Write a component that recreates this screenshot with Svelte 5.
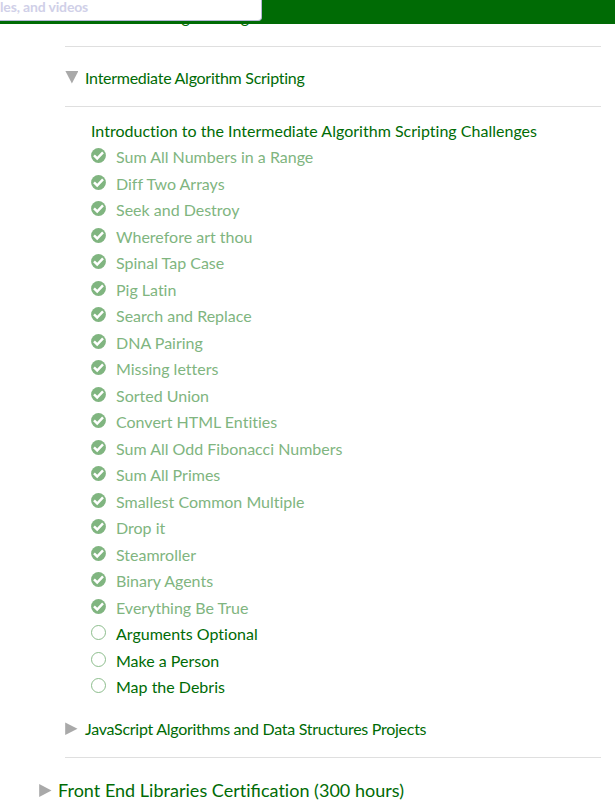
<script>
  const challenges = [
    'Sum All Numbers in a Range',
    'Diff Two Arrays',
    'Seek and Destroy',
    'Wherefore art thou',
    'Spinal Tap Case',
    'Pig Latin',
    'Search and Replace',
    'DNA Pairing',
    'Missing letters',
    'Sorted Union',
    'Convert HTML Entities',
    'Sum All Odd Fibonacci Numbers',
    'Sum All Primes',
    'Smallest Common Multiple',
    'Drop it',
    'Steamroller',
    'Binary Agents',
    'Everything Be True',
    'Arguments Optional',
    'Make a Person',
    'Map the Debris'
  ].map((title, i) => ({ title, done: i < 18 }));
</script>

<div class="page">
  <header>
    <div class="search">les, and videos</div>
  </header>

  <main>
    <section class="block previous"><h5>Functional Programming</h5></section>

    <section class="block open">
      <svg class="arrow" width="13" height="13" viewBox="0 0 13 13"><path d="M.4 0H13.4L6.9 12.4Z" /></svg>
      <h5>Intermediate Algorithm Scripting</h5>
    </section>

    <ul>
      <li class="intro">Introduction to the Intermediate Algorithm Scripting Challenges</li>
      {#each challenges as c}
        <li class:done={c.done}>
          <svg class="mark" width="15" height="15" viewBox="0 0 15 15">
            {#if c.done}
              <circle cx="7.5" cy="7.5" r="7.4" fill="#80b580" />
              <path d="M3 7.4 6.2 10.5 12 4.4" fill="none" stroke="#fff" stroke-width="2.5" />
            {:else}
              <circle cx="7.5" cy="7.5" r="7" fill="#fff" stroke="#80b580" stroke-width=".9" />
            {/if}
          </svg>
          <span>{c.title}</span>
        </li>
      {/each}
    </ul>

    <section class="block projects">
      <svg class="arrow" width="13" height="13" viewBox="0 0 13 13"><path d="M.2 .4V13L12.5 6.7Z" /></svg>
      <h5>JavaScript Algorithms and Data Structures Projects</h5>
    </section>
  </main>

  <section class="superblock">
    <svg class="arrow" width="13" height="13" viewBox="0 0 13 13"><path d="M.2 0V13L12.5 6.5Z" /></svg>
    <h4>Front End Libraries Certi<span class="ligature">fi</span>cation (300 hours)</h4>
  </section>
</div>

<style>
  :global(body) {
    background: #fff;
  }
  .page {
    height: 807px;
    overflow: hidden;
    box-sizing: border-box;
    color: #006b05;
    font-family: Lato, sans-serif;
    font-size: 16px;
    font-variant-ligatures: none;
  }
  header {
    position: relative;
    z-index: 1;
    height: 24px;
    background: #006b05;
  }
  .search {
    box-sizing: border-box;
    width: 262px;
    height: 21px;
    background: #fff;
    border: solid #b6b6d5;
    border-width: 0 1px 1px 0;
    border-radius: 0 0 4px 0;
    color: #d0d0e8;
    font-size: 14px;
    letter-spacing: -0.15px;
    font-weight: 700;
    line-height: 13px;
    white-space: nowrap;
  }
  main {
    margin: 0 14px 0 65px;
  }
  h4,
  h5 {
    margin: 0;
    font-weight: 400;
    white-space: nowrap;
  }
  h5 {
    font-size: 16px;
    letter-spacing: -0.27px;
    line-height: 20px;
  }
  h4 {
    font-size: 18px;
    letter-spacing: 0.02px;
    line-height: 24px;
  }
  .block {
    display: flex;
    box-sizing: border-box;
    gap: 7px;
    border-bottom: 1px solid #dfdfdf;
  }
  .previous {
    height: 33px;
    margin-top: -10px;
    padding-left: 19px;
  }
  .previous h5 {
    margin-top: -7px;
  }
  .open {
    height: 60px;
    padding-top: 21px;
  }
  .arrow {
    flex: none;
    margin-top: 3px;
    fill: #a9a9a9;
  }
  ul {
    list-style: none;
    margin: 0;
    padding: 10.6px 0 0.4px 26px;
  }
  li {
    display: flex;
    height: 26.5px;
    gap: 10px;
    line-height: 26.5px;
    white-space: nowrap;
  }
  .intro {
    letter-spacing: 0.015px;
  }
  .mark {
    flex: none;
    margin-top: 4px;
  }
  .done span {
    color: #80b580;
  }
  .projects {
    height: 57px;
    padding-top: 18px;
  }
  .superblock {
    display: flex;
    gap: 6px;
    padding: 20px 0 0 39px;
  }
  .superblock .arrow {
    margin-top: 6px;
  }
  .ligature {
    letter-spacing: 0;
    font-variant-ligatures: common-ligatures;
  }
</style>
